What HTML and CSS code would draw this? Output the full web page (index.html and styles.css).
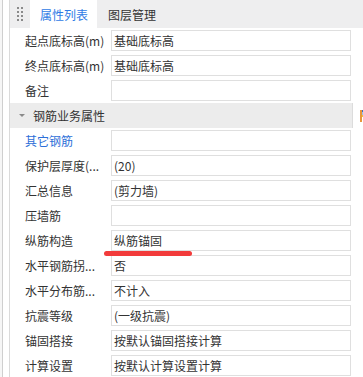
FILE: index.html
```html
<!DOCTYPE html>
<html>
<head>
    <title>属性列表</title>
    <link rel="stylesheet" href="styles.css">
</head>
<body>
    <div class="window">
        <div class="panel">
            <div class="tabs">
                <div class="grip">
                    <svg width="8" height="16" viewBox="0 0 8 16">
                        <rect x="1" y="1" width="2" height="2" fill="#8a8a8a"/>
                        <rect x="5" y="1" width="2" height="2" fill="#8a8a8a"/>
                        <rect x="1" y="5" width="2" height="2" fill="#8a8a8a"/>
                        <rect x="5" y="5" width="2" height="2" fill="#8a8a8a"/>
                        <rect x="1" y="9" width="2" height="2" fill="#8a8a8a"/>
                        <rect x="5" y="9" width="2" height="2" fill="#8a8a8a"/>
                        <rect x="1" y="13" width="2" height="2" fill="#8a8a8a"/>
                        <rect x="5" y="13" width="2" height="2" fill="#8a8a8a"/>
                    </svg>
                </div>
                <div class="tab tab-active">属性列表</div>
                <div class="tab">图层管理</div>
            </div>

            <div class="list">
                <div class="row">
                    <div class="label">起点底标高(m)</div>
                    <div class="value">基础底标高</div>
                </div>
                <div class="row">
                    <div class="label">终点底标高(m)</div>
                    <div class="value">基础底标高</div>
                </div>
                <div class="row">
                    <div class="label">备注</div>
                    <div class="value"></div>
                </div>
                <div class="section">
                    <span class="arrow"></span>
                    <span>钢筋业务属性</span>
                </div>
                <div class="row">
                    <div class="label label-link">其它钢筋</div>
                    <div class="value"></div>
                </div>
                <div class="row">
                    <div class="label">保护层厚度(...</div>
                    <div class="value">(20)</div>
                </div>
                <div class="row">
                    <div class="label">汇总信息</div>
                    <div class="value">(剪力墙)</div>
                </div>
                <div class="row">
                    <div class="label">压墙筋</div>
                    <div class="value"></div>
                </div>
                <div class="row">
                    <div class="label">纵筋构造</div>
                    <div class="value">纵筋锚固</div>
                </div>
                <div class="row">
                    <div class="label">水平钢筋拐...</div>
                    <div class="value">否</div>
                </div>
                <div class="row">
                    <div class="label">水平分布筋...</div>
                    <div class="value">不计入</div>
                </div>
                <div class="row">
                    <div class="label">抗震等级</div>
                    <div class="value">(一级抗震)</div>
                </div>
                <div class="row">
                    <div class="label">锚固搭接</div>
                    <div class="value">按默认锚固搭接计算</div>
                </div>
                <div class="row">
                    <div class="label">计算设置</div>
                    <div class="value">按默认计算设置计算</div>
                </div>
            </div>
        </div>

        <div class="mark"></div>

        <svg class="side-icon" width="6" height="12" viewBox="0 0 6 12">
            <rect x="0" y="0" width="2" height="12" fill="#e8963a"/>
            <rect x="2" y="0" width="4" height="2" fill="#3a6fc4"/>
            <rect x="2" y="5" width="4" height="2" fill="#f0c040"/>
            <rect x="2" y="2" width="1" height="3" fill="#9ec3e8"/>
        </svg>
    </div>
</body>
</html>
```

FILE: styles.css
```css
body {
    margin: 0;
    padding: 0;
    background-color: #f6f6f6;
    font-family: "Noto Sans CJK SC", "Noto Sans", sans-serif;
    font-size: 12px;
    color: #333;
    overflow: hidden;
}

.window {
    position: relative;
    margin-left: 2px;
    height: 377px;
    padding-left: 6px;
    border-left: 1px solid #cfcfcf;
    background-color: #fff;
}

.panel {
    border-left: 1px solid #dadada;
    height: 100%;
}

.tabs {
    display: flex;
    height: 28px;
    background-color: #eeeeef;
}

.grip {
    width: 20px;
    display: flex;
    align-items: center;
    justify-content: center;
}

.tab {
    display: flex;
    align-items: center;
    padding: 0 10px 0 11px;
    color: #333;
}

.tab-active {
    width: 67px;
    box-sizing: border-box;
    padding: 0 0 0 10px;
    background-color: #fff;
    color: #2f7be5;
}

.list {
    width: 343px;
}

.row {
    display: flex;
    align-items: center;
    height: 25px;
}

.label {
    width: 101px;
    padding-left: 15px;
    box-sizing: border-box;
    white-space: nowrap;
    overflow: hidden;
}

.label-link {
    color: #2d6fd8;
}

.value {
    width: 240px;
    height: 21px;
    box-sizing: border-box;
    border: 1px solid #dfdfdf;
    padding-left: 2px;
    line-height: 19px;
    white-space: nowrap;
    overflow: hidden;
}

.section {
    display: flex;
    align-items: center;
    height: 25px;
    background-color: #ececec;
    border-right: 1px solid #dcdcdc;
}

.arrow {
    width: 0;
    height: 0;
    margin: 0 8px 0 9px;
    border-left: 3px solid transparent;
    border-right: 3px solid transparent;
    border-top: 3px solid #8a8a8a;
}

.mark {
    position: absolute;
    left: 101px;
    top: 251px;
    width: 88px;
    height: 5px;
    border-radius: 3px;
    background-color: #f23b3b;
}

.side-icon {
    position: absolute;
    left: 357px;
    top: 110px;
}
```
